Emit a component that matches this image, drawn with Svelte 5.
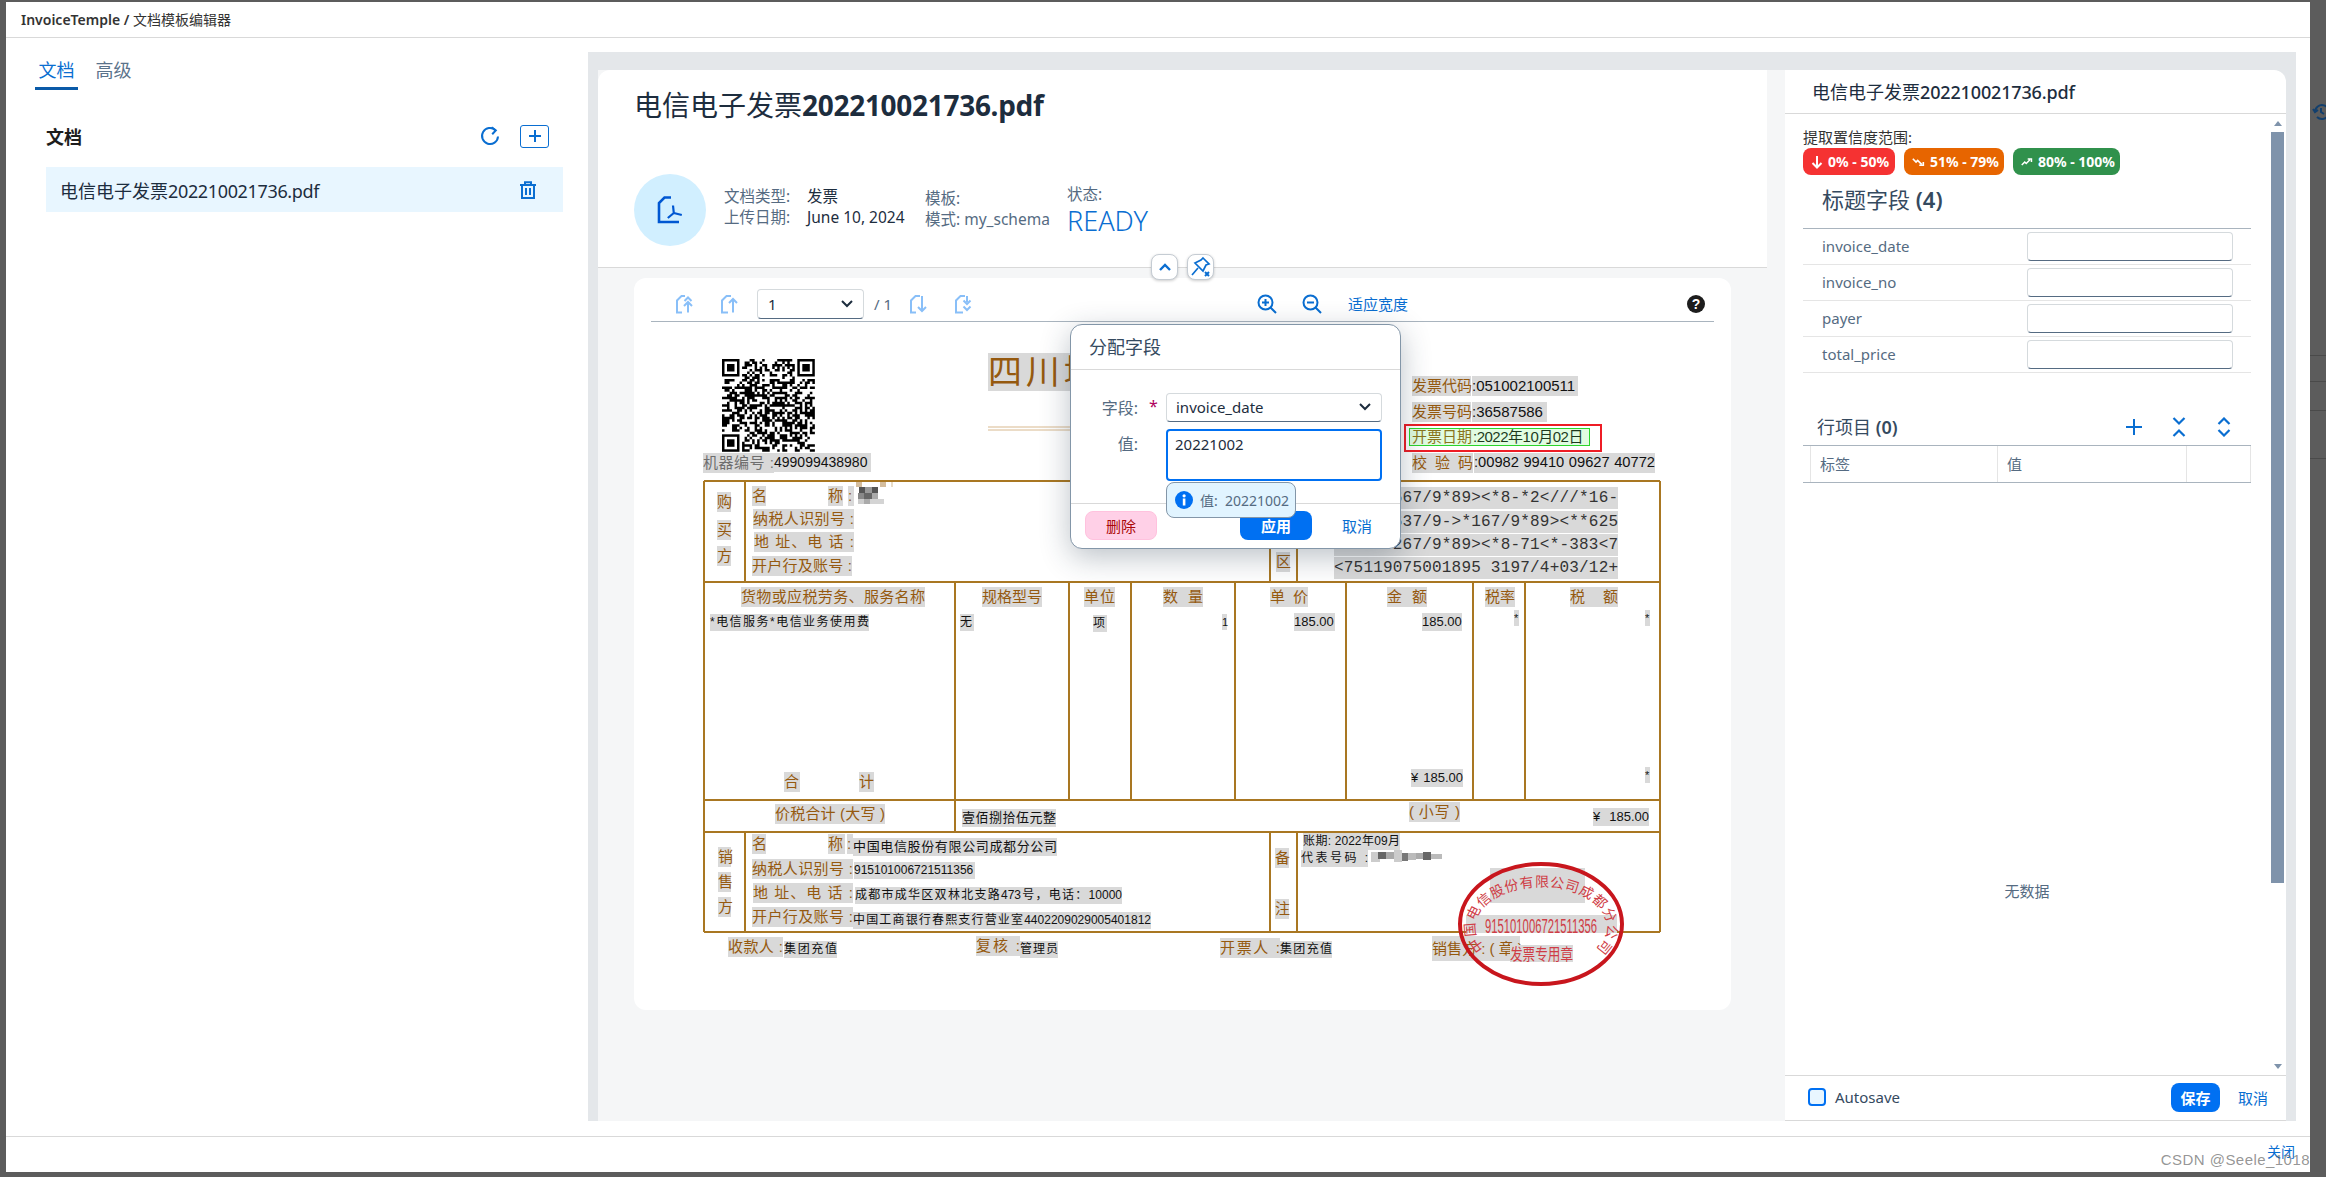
<script>
  const ox = 634;
  const oy = 323;

  const headerFields = ['invoice_date', 'invoice_no', 'payer', 'total_price'];

  // x1, x2, centre y, text, font size, kind
  const items = [
    [1490, 1585, 885, '', 14, 'p', 35],
    [703, 774, 462.5, '机器编号 :', 15, 'g'],
    [774, 871, 462.5, '499099438980', 14, 'v'],
    [988, 1400, 372, '四川增值税电子普通发票', 34, 'l', 38],
    [1412, 1471, 386, '发票代码', 15, 'l'],
    [1472, 1578, 386, ':051002100511', 15, 'v'],
    [1412, 1471, 412, '发票号码', 15, 'l'],
    [1472, 1547, 412, ':36587586', 15, 'v'],
    [1412, 1471, 437, '开票日期', 15, 'lc'],
    [1473, 1589, 437, ':2022年10月02日', 15, 'vc'],
    [1412, 1473, 463, '校 验 码', 15, 'l'],
    [1474, 1655, 463, ':00982 99410 09627 40772', 14.7, 'v'],

    [717, 731, 502, '购', 15, 'l'],
    [717, 731, 530, '买', 15, 'l'],
    [717, 731, 556, '方', 15, 'l'],
    [752, 766, 496, '名', 15, 'l'],
    [828, 843, 496, '称', 15, 'l'],
    [848, 854, 496, ':', 15, 'l'],
    [753, 854, 519, '纳税人识别号 :', 15, 'l'],
    [754, 854, 542, '地 址、电 话 :', 15, 'l'],
    [752, 852, 566, '开户行及账号 :', 15, 'l'],
    [1276, 1290, 562, '区', 15, 'l'],

    [741, 925, 597, '货物或应税劳务、服务名称', 15, 'l'],
    [982, 1042, 597, '规格型号', 15, 'l'],
    [1084, 1115, 597, '单位', 15, 'l'],
    [1163, 1203, 597, '数 量', 15, 'l'],
    [1270, 1308, 597, '单 价', 15, 'l'],
    [1387, 1427, 597, '金 额', 15, 'l'],
    [1485, 1515, 597, '税率', 15, 'l'],
    [1570, 1618, 597, '税 额', 15, 'l'],
    [710, 869, 622, '*电信服务*电信业务使用费', 12, 'v'],
    [960, 974, 622, '无', 12, 'v'],
    [1093, 1107, 623, '项', 12, 'v'],
    [1222, 1227, 622, '1', 11, 'v'],
    [1294, 1335, 622, '185.00', 13, 'v'],
    [1422, 1462, 622, '185.00', 13, 'v'],
    [1514, 1519, 618, '*', 11, 'v'],
    [1645, 1650, 618, '*', 11, 'v'],
    [784, 800, 782, '合', 15, 'l'],
    [859, 874, 782, '计', 15, 'l'],
    [1411, 1463, 778, '¥ 185.00', 13, 'v'],
    [1645, 1650, 775, '*', 11, 'v'],

    [775, 885, 814, '价税合计 (大写 )', 15, 'l'],
    [962, 1056, 818, '壹佰捌拾伍元整', 13, 'v'],
    [1409, 1460, 812, '( 小写 )', 15, 'l'],
    [1593, 1649, 817, '¥ 185.00', 13, 'v'],

    [718, 731, 857, '销', 15, 'l'],
    [718, 731, 882, '售', 15, 'l'],
    [718, 731, 907, '方', 15, 'l'],
    [752, 766, 844, '名', 15, 'l'],
    [828, 845, 844, '称', 15, 'l'],
    [847, 853, 844, ':', 15, 'l'],
    [853, 1057, 847, '中国电信股份有限公司成都分公司', 13, 'v'],
    [752, 853, 869, '纳税人识别号 :', 15, 'l'],
    [854, 975, 870, '915101006721511356', 12, 'v'],
    [753, 853, 893, '地 址、电 话 :', 15, 'l'],
    [855, 1122, 895, '成都市成华区双林北支路473号，电话：10000', 12, 'v'],
    [752, 853, 917, '开户行及账号 :', 15, 'l'],
    [853, 1151, 920, '中国工商银行春熙支行营业室4402209029005401812', 12, 'v'],
    [728, 783, 947, '收款人 :', 15, 'l'],
    [784, 837, 949, '集团充值', 12, 'v'],
    [976, 1020, 946, '复核 :', 15, 'l'],
    [1020, 1058, 949, '管理员', 12, 'v'],
    [1220, 1280, 948, '开票人 :', 15, 'l'],
    [1280, 1332, 949, '集团充值', 12, 'v'],

    [1275, 1289, 858, '备', 15, 'l'],
    [1275, 1289, 909, '注', 15, 'l'],
    [1303, 1400, 841, '账期: 2022年09月', 12, 'v'],
    [1301, 1368, 858, '代表号码 :', 12, 'v'],
    [1432, 1520, 948, '销售方 : ( 章 )', 15, 'l', 25],
    [1466, 1617, 924, '', 14, 'p', 18],
    [1510, 1573, 953, '', 14, 'p', 17]
  ];

  const cipher = [
    [498, '<75110667/9*89><*8-*2<///*16-'],
    [522, '<75110637/9->*167/9*89><**625'],
    [545, '75110 6267/9*89><*8-71<*-383<7'.replace(' ', '')],
    [568, '<75119075001895 3197/4+03/12+']
  ];

  const lines = [
    // horizontal
    [704, 481, 1660, 481], [704, 582, 1660, 582], [704, 800, 1660, 800],
    [704, 832, 1660, 832], [704, 932, 1660, 932],
    // outer
    [704, 481, 704, 932], [1660, 481, 1660, 932],
    // buyer and seller
    [745, 481, 745, 582], [1270, 481, 1270, 582], [1297, 481, 1297, 582],
    [745, 832, 745, 932], [1270, 832, 1270, 932], [1297, 832, 1297, 932],
    // item columns
    [955, 582, 955, 832], [1069, 582, 1069, 800], [1131, 582, 1131, 800],
    [1235, 582, 1235, 800], [1346, 582, 1346, 800], [1473, 582, 1473, 800],
    [1525, 582, 1525, 800]
  ];

  const blurred = [
    [856, 482, 6, 5, '#d4bd9e'], [880, 482, 6, 5, '#d4bd9e'], [891, 482, 2, 5, '#e8dcc8'],
    [859, 487, 6, 6, '#555'], [865, 487, 7, 6, '#999'], [872, 487, 6, 6, '#555'],
    [858, 493, 6, 6, '#888'], [864, 493, 8, 6, '#666'], [872, 493, 6, 6, '#aaa'],
    [858, 499, 6, 5, '#ccc'], [864, 499, 6, 5, '#aaa'], [870, 499, 14, 5, '#d4d4d4'],
    [1371, 852, 9, 10, '#ccc'], [1378, 852, 8, 7, '#666'], [1386, 852, 8, 7, '#aaa'],
    [1394, 850, 8, 12, '#ccc'], [1402, 853, 6, 8, '#777'], [1408, 853, 8, 7, '#bbb'],
    [1416, 853, 7, 6, '#aaa'], [1423, 852, 8, 8, '#666'], [1431, 854, 11, 5, '#bbb']
  ];

  // finder squares plus a seeded fill, it only has to look like a QR code
  const qrSize = 37;
  const cell = 2.51;
  function makeQr() {
    let d = '';
    let seed = 20221002;
    const finder = (r, c) => (r < 8 && c < 8) || (r < 8 && c >= qrSize - 8) || (r >= qrSize - 8 && c < 8);
    for (let r = 0; r < qrSize; r++) {
      for (let c = 0; c < qrSize; c++) {
        seed = (seed * 1103515245 + 12345) & 0x7fffffff;
        if (!finder(r, c) && (seed >> 16) % 100 < 52) {
          d += `M${(c * cell).toFixed(2)} ${(r * cell).toFixed(2)}h${cell}v${cell}h-${cell}z`;
        }
      }
    }
    return d;
  }
  const qrPath = makeQr();
  const finders = [[0, 0], [30 * cell, 0], [0, 30 * cell]];
</script>

<div class="page">
  <div class="behind">
    <svg class="behind-icon" viewBox="0 0 18 18" width="18" height="18" fill="none" stroke="#123f6d" stroke-width="2"><path d="M3 9a7 7 0 1 1 2 5M1 6l2 3 3-2M9 5v4l3 2"/></svg>
    <i style="top:355px"></i><i style="top:381px"></i><i style="top:410px"></i><i style="top:458px"></i>
  </div>

  <div class="window">
    <header class="win-head">InvoiceTemple / <span class="thin">文档模板编辑器</span></header>

    <div class="win-body">
      <aside class="left">
        <nav class="tabs">
          <span class="tab active">文档</span>
          <span class="tab">高级</span>
        </nav>
        <div class="doc-head">
          <strong>文档</strong>
          <svg class="refresh" viewBox="0 0 20 20" width="20" height="20" fill="none" stroke="#0a6ed1" stroke-width="2"><path d="M15.5 4.2A8 8 0 1 0 18 10.5"/><path d="M11.5 1.2l4.3 3.2-3.6 3.8"/></svg>
          <span class="add"><svg viewBox="0 0 14 14" width="14" height="14" stroke="#0a6ed1" stroke-width="2"><path d="M7 1v12M1 7h12"/></svg></span>
        </div>
        <div class="doc-item">
          <span>电信电子发票<span class="tight">202210021736.pdf</span></span>
          <svg viewBox="0 0 16 18" width="16" height="18" fill="none" stroke="#0a6ed1" stroke-width="2"><path d="M0 4h16M5 4V1.2h6V4M2 4v13h12V4M6 7v7M10 7v7"/></svg>
        </div>
      </aside>

      <main class="main">
        <section class="work">
          <div class="doc-card">
            <h1>电信电子发票<b>202210021736.pdf</b></h1>
            <div class="meta">
              <div class="avatar">
                <svg viewBox="0 0 26 28" width="26" height="28" fill="none" stroke="#0057d2" stroke-width="2.6"><path d="M14 1.500H7.500L2 7V26H22"/><path d="M16 9.500l.8 7.500M16.800 17l-6 5M16.800 17l8 2" stroke-width="2.200"/></svg>
              </div>
              <div class="col1">
                <span class="key">文档类型:</span><span class="val">发票</span>
                <span class="key">上传日期:</span><span class="val">June 10, 2024</span>
              </div>
              <div class="col2">
                <div>模板:</div>
                <div>模式: my_schema</div>
              </div>
              <div class="col3">
                <div>状态:</div>
                <div class="ready">READY</div>
              </div>
            </div>
          </div>

          <button class="float up" aria-label="collapse">
            <svg viewBox="0 0 12 8" width="12" height="8" fill="none" stroke="#0a6ed1" stroke-width="2.4"><path d="M1 7l5-5 5 5"/></svg>
          </button>
          <button class="float pin" aria-label="unpin">
            <svg viewBox="0 0 22 22" width="22" height="22" fill="none" stroke="#0a6ed1" stroke-width="1.7"><path d="M13 2l6 6-3 1-3 6-8-8 6-3zM8 12l-6 7"/><path d="M15 16l4 4M19 16l-4 4" stroke-width="2"/></svg>
          </button>

          <div class="pdf-card">
            <div class="toolbar">
              <svg class="pg first" viewBox="0 0 18 20" width="18" height="20"><path d="M10 2H6.500L2 6.500V18.500H7"/><path d="M13 18.500V9M9 12l4-4 4 4M9.500 7l3.500-3.500L16.500 7"/></svg>
              <svg class="pg second" viewBox="0 0 18 20" width="18" height="20"><path d="M11 2H6.500L2 6.500V18.500H8"/><path d="M13 18.500V5M9 9l4-4 4 4"/></svg>
              <div class="page-select">
                <span>1</span>
                <svg viewBox="0 0 12 8" width="12" height="8" fill="none" stroke="#1d2d3e" stroke-width="2"><path d="M1 1l5 5 5-5"/></svg>
              </div>
              <span class="of">/ 1</span>
              <svg class="pg third" viewBox="0 0 18 20" width="18" height="20"><path d="M7 18.500H2V6.500L6.500 2H11"/><path d="M13 2v15M9 13l4 4 4-4"/></svg>
              <svg class="pg fourth" viewBox="0 0 18 20" width="18" height="20"><path d="M9 18.500H2V6.500L6.500 2H11"/><path d="M13 2v6M9.500 6.500L13 10l3.500-3.500M9.500 12.500L13 16l3.500-3.500"/></svg>
              <svg class="mag in" viewBox="0 0 20 20" width="20" height="20"><circle cx="8.500" cy="8.500" r="7"/><path d="M13.500 13.500L19 19M8.500 5v7M5 8.500h7"/></svg>
              <svg class="mag out" viewBox="0 0 20 20" width="20" height="20"><circle cx="8.500" cy="8.500" r="7"/><path d="M13.500 13.500L19 19M5 8.500h7"/></svg>
              <span class="fit">适应宽度</span>
              <span class="help">?</span>
            </div>

            <div class="sheet">
              <svg class="sheet-lines" viewBox="{ox} {oy} 1097 687" width="1097" height="687">
                <path d="M988 427H1400M988 430H1400" stroke="#d8b98f" stroke-width="1" fill="none"/>
                {#each lines as l}
                  <line x1={l[0]} y1={l[1]} x2={l[2]} y2={l[3]} stroke="#a97722" stroke-width="2"/>
                {/each}
              </svg>

              <svg class="qr" viewBox="0 0 93 93" width="93" height="93">
                <path d={qrPath} fill="#000"/>
                {#each finders as f}
                  <rect x={f[0] + 1.25} y={f[1] + 1.25} width="15" height="15" fill="none" stroke="#000" stroke-width="2.5"/>
                  <rect x={f[0] + 5} y={f[1] + 5} width="7.5" height="7.5" fill="#000"/>
                {/each}
              </svg>

              {#each items as it}
                <span
                  class="txt {it[5]}"
                  style="left:{it[0] - ox}px;top:{it[2] - oy - (it[6] ?? it[4] + 5) / 2}px;width:{it[1] - it[0]}px;height:{it[6] ?? it[4] + 5}px;line-height:{it[6] ?? it[4] + 5}px;font-size:{it[4]}px"
                >{it[3]}</span>
              {/each}

              {#each cipher as c}
                <span class="cipher" style="top:{c[0] - oy - 11}px">{c[1]}</span>
              {/each}

              <svg class="sheet-lines top" viewBox="{ox} {oy} 1097 687" width="1097" height="687">
                {#each blurred as b}
                  <rect x={b[0]} y={b[1]} width={b[2]} height={b[3]} fill={b[4]}/>
                {/each}
                <rect x="1405" y="425" width="196" height="26" fill="none" stroke="#ee1c25" stroke-width="2"/>
                <rect x="1409.5" y="428.5" width="180" height="17" fill="rgba(90,240,90,.18)" stroke="#2bd52b" stroke-width="1"/>
                <ellipse cx="1541" cy="924" rx="81" ry="60" fill="none" stroke="#c8161d" stroke-width="4"/>
                <defs><path id="stampArc" d="M1485 948A66 40 0 1 1 1597 948"/></defs>
                <text class="stamp arc"><textPath href="#stampArc">中国电信股份有限公司成都分公司</textPath></text>
                <text class="stamp num" x="1485" y="933" textLength="112" lengthAdjust="spacingAndGlyphs">915101006721511356</text>
                <text class="stamp big" x="1510" y="960" textLength="63" lengthAdjust="spacingAndGlyphs">发票专用章</text>
              </svg>
            </div>

            <div class="assign">
              <div class="assign-title">分配字段</div>
              <div class="assign-form">
                <span class="lbl">字段:</span>
                <span class="star">*</span>
                <div class="field-select">
                  <span>invoice_date</span>
                  <svg viewBox="0 0 12 8" width="12" height="8" fill="none" stroke="#1d2d3e" stroke-width="2"><path d="M1 1l5 5 5-5"/></svg>
                </div>
                <span class="lbl val-lbl">值:</span>
                <span></span>
                <textarea readonly>20221002</textarea>
              </div>
              <div class="assign-foot">
                <button class="del">删除</button>
                <button class="apply">应用</button>
                <button class="ghost">取消</button>
              </div>
              <div class="hint">
                <svg viewBox="0 0 18 18" width="18" height="18"><circle cx="9" cy="9" r="9" fill="#0070f2"/><rect x="7.8" y="7.5" width="2.6" height="7" fill="#fff"/><circle cx="9.1" cy="4.8" r="1.6" fill="#fff"/></svg>
                <span>值:&nbsp; 20221002</span>
              </div>
            </div>
          </div>
        </section>

        <section class="side">
          <div class="side-title">电信电子发票<b>202210021736.pdf</b></div>
          <div class="side-body">
            <div class="range-label">提取置信度范围:</div>
            <div class="badges">
              <span class="badge red">
                <svg viewBox="0 0 12 14" width="12" height="14" fill="none" stroke="#fff" stroke-width="2"><path d="M6 1v11M1.500 8L6 12.500 10.500 8"/></svg>
                0% - 50%
              </span>
              <span class="badge orange">
                <svg viewBox="0 0 16 12" width="16" height="12" fill="none" stroke="#fff" stroke-width="2"><path d="M1 2l4 4 2-2 5 5M9 10h5V6"/></svg>
                51% - 79%
              </span>
              <span class="badge green">
                <svg viewBox="0 0 16 12" width="16" height="12" fill="none" stroke="#fff" stroke-width="2"><path d="M1 10l4-4 2 2 5-5M9 2h5v4"/></svg>
                80% - 100%
              </span>
            </div>

            <h2>标题字段 <b>(4)</b></h2>
            <div class="fields">
              {#each headerFields as f}
                <div class="field-row">
                  <label for={f}>{f}</label>
                  <input id={f} type="text" />
                </div>
              {/each}
            </div>

            <div class="lines-head">
              <h3>行项目 <b>(0)</b></h3>
              <svg viewBox="0 0 20 20" width="20" height="20" fill="none" stroke="#0a6ed1" stroke-width="2"><path d="M10 2v16M2 10h16"/></svg>
              <svg viewBox="0 0 20 20" width="20" height="20" fill="none" stroke="#0a6ed1" stroke-width="2.2"><path d="M4.500 1l5.500 5.500L15.500 1M4.500 19l5.500-5.500 5.500 5.500"/></svg>
              <svg viewBox="0 0 20 20" width="20" height="20" fill="none" stroke="#0a6ed1" stroke-width="2.2"><path d="M4.500 7L10 1.500 15.500 7M4.500 13l5.500 5.500 5.500-5.500"/></svg>
            </div>
            <div class="lines-table">
              <span></span><span>标签</span><span>值</span><span></span>
            </div>
            <div class="empty">无数据</div>

            <div class="scrollbar">
              <i class="arrow-up"></i>
              <div class="thumb"></div>
              <i class="arrow-down"></i>
            </div>
          </div>
          <div class="side-foot">
            <span class="check"></span>
            <span class="auto">Autosave</span>
            <button class="apply save">保存</button>
            <button class="ghost">取消</button>
          </div>
        </section>
      </main>
    </div>

    <footer class="win-foot"><span>关闭</span></footer>
  </div>
  <div class="watermark">CSDN @Seele_1018</div>
</div>

<style>
  :global(body) {
    margin: 0;
    background: #5c5c5c;
  }

  .page {
    position: relative;
    width: 2326px;
    height: 1177px;
    box-sizing: border-box;
    padding: 2px 16px 5px 6px;
    overflow: hidden;
    font-family: "Noto Sans", "Noto Sans CJK SC", sans-serif;
    color: #1d2d3e;
  }

  .behind i {
    position: absolute;
    left: 2310px;
    width: 16px;
    height: 1px;
    background: #4a4a4a;
  }
  .behind-icon {
    position: absolute;
    left: 2312px;
    top: 103px;
  }

  .window {
    height: 100%;
    display: flex;
    flex-direction: column;
    background: #fff;
  }

  .win-head {
    height: 35px;
    line-height: 35px;
    flex: none;
    padding-left: 15px;
    font-size: 14px;
    font-weight: 600;
    color: #333;
    border-bottom: 1px solid #d9d9d9;
  }
  .thin {
    font-weight: 400;
  }

  .win-body {
    flex: 1;
    display: flex;
    min-height: 0;
  }

  .left {
    width: 582px;
    flex: none;
  }

  .tabs {
    display: flex;
    gap: 14px;
    padding: 19px 0 0 29px;
  }
  .tab {
    width: 43px;
    height: 33px;
    text-align: center;
    font-size: 18px;
    line-height: 26px;
    color: #5b738b;
    box-sizing: border-box;
  }
  .tab.active {
    color: #0a6ed1;
    border-bottom: 3px solid #0a5aa8;
  }

  .doc-head {
    display: flex;
    align-items: center;
    margin: 34px 0 0 40px;
    width: 503px;
    height: 24px;
  }
  .doc-head strong {
    font-size: 18px;
    color: #1d1d1d;
    flex: 1;
  }
  .add {
    width: 27px;
    height: 21px;
    margin-left: 20px;
    border: 1px solid #0a6ed1;
    border-radius: 3px;
    display: flex;
    align-items: center;
    justify-content: center;
  }

  .doc-item {
    margin: 19px 0 0 40px;
    width: 517px;
    height: 45px;
    background: #e8f6ff;
    display: flex;
    align-items: center;
    justify-content: space-between;
    padding: 0 27px 0 14px;
    box-sizing: border-box;
    font-size: 18px;
  }
  .tight {
    letter-spacing: -.35px;
  }

  .main {
    flex: 1;
    display: flex;
    margin: 14px 14px 15px 0;
    padding: 18px 10px 0;
    background: #e4e7ea;
    min-width: 0;
  }

  .work {
    position: relative;
    width: 1187px;
    flex: none;
    background: #f5f6f7;
  }

  .doc-card {
    width: 1169px;
    height: 198px;
    box-sizing: border-box;
    padding: 18px 36px 0 36px;
    background: #fff;
    border-radius: 12px 0 0 0;
    border-bottom: 1px solid #d9d9d9;
  }
  h1 {
    margin: 0;
    font-size: 28px;
    line-height: 34px;
    font-weight: 400;
  }
  h1 b {
    letter-spacing: -.3px;
  }
  .meta {
    display: flex;
    margin-top: 52px;
    font-size: 15.5px;
    line-height: 21px;
    color: #556b82;
  }
  .avatar {
    width: 72px;
    height: 72px;
    border-radius: 50%;
    background: #d1efff;
    display: flex;
    align-items: center;
    justify-content: center;
  }
  .col1 {
    margin-left: 18px;
    padding-top: 12px;
    width: 201px;
    display: grid;
    grid-template-columns: 83px 1fr;
    grid-auto-rows: 21px;
  }
  .val {
    color: #1d2d3e;
  }
  .col2 {
    width: 142px;
    padding-top: 14px;
  }
  .col3 {
    padding-top: 10px;
  }
  .ready {
    font-size: 27px;
    line-height: 32px;
    font-weight: 300;
    color: #0a6ed1;
  }

  .float {
    position: absolute;
    top: 184px;
    width: 27px;
    height: 26px;
    padding: 0;
    display: flex;
    align-items: center;
    justify-content: center;
    background: #fff;
    border: 1px solid #c5ccd3;
    border-radius: 8px;
    box-shadow: 0 1px 3px rgba(0, 0, 0, .2);
    z-index: 2;
  }
  .up {
    left: 553px;
  }
  .pin {
    left: 589px;
  }

  .pdf-card {
    position: absolute;
    left: 36px;
    top: 208px;
    width: 1097px;
    height: 732px;
    background: #fff;
    border-radius: 12px;
  }

  .toolbar {
    display: flex;
    align-items: center;
    height: 44px;
    margin: 0 17px;
    padding: 8px 0 0 24px;
    box-sizing: border-box;
    border-bottom: 1px solid #a9b4be;
    font-size: 15px;
    color: #556b82;
  }
  .pg {
    flex: none;
    fill: none;
    stroke: #89bff8;
    stroke-width: 2;
  }
  .second {
    margin-left: 27px;
  }
  .page-select {
    width: 107px;
    height: 30px;
    margin-left: 19px;
    box-sizing: border-box;
    padding: 0 10px;
    display: flex;
    align-items: center;
    justify-content: space-between;
    border: 1px solid #d5dadd;
    border-bottom-color: #556b82;
    border-radius: 4px;
    color: #1d2d3e;
  }
  .of {
    margin-left: 10px;
    width: 25px;
  }
  .third {
    margin-left: 10px;
  }
  .fourth {
    margin-left: 27px;
  }
  .mag {
    flex: none;
    fill: none;
    stroke: #0a6ed1;
    stroke-width: 2;
  }
  .in {
    margin-left: 285px;
  }
  .out {
    margin-left: 25px;
  }
  .fit {
    margin-left: 26px;
    font-size: 15px;
    color: #0a6ed1;
    width: 63px;
    white-space: nowrap;
  }
  .help {
    margin-left: 276px;
    width: 18px;
    height: 18px;
    border-radius: 50%;
    background: #1d1d1d;
    color: #fff;
    font: 700 14px/18px "Liberation Sans", sans-serif;
    text-align: center;
  }

  .sheet {
    position: absolute;
    left: 0;
    top: 45px;
    width: 1097px;
    height: 687px;
    overflow: hidden;
    border-radius: 0 0 12px 12px;
  }
  .sheet-lines {
    position: absolute;
    left: 0;
    top: 0;
  }
  .qr {
    position: absolute;
    left: 88px;
    top: 36px;
  }

  .txt {
    position: absolute;
    display: block;
    white-space: nowrap;
    text-align: justify;
    text-align-last: justify;
    font-family: "Liberation Sans", "Noto Sans CJK SC", sans-serif;
    background: #d9d9d9;
  }
  .l {
    color: #95590f;
  }
  .g {
    color: #6e6e6e;
  }
  .v {
    color: #111;
  }
  .lc {
    color: #95590f;
    background: #fff;
  }
  .vc {
    color: #111;
    background: #fff;
    text-align-last: left;
    letter-spacing: -.5px;
  }
  .cipher {
    position: absolute;
    left: 700px;
    height: 22px;
    background: #d9d9d9;
    white-space: pre;
    font: 16px/22px "Liberation Mono", monospace;
    letter-spacing: .2px;
    color: #333;
  }

  .stamp {
    fill: #cf3d46;
    font: 14px "Noto Sans CJK SC", sans-serif;
  }
  .arc {
    letter-spacing: .6px;
  }
  .num {
    font: 20px "Liberation Sans", sans-serif;
  }
  .big {
    font-size: 16px;
  }

  .assign {
    position: absolute;
    left: 436px;
    top: 46px;
    width: 331px;
    height: 225px;
    box-sizing: border-box;
    background: #fff;
    border: 1px solid #8396a8;
    border-radius: 12px;
    box-shadow: 0 8px 30px rgba(30, 50, 70, .3);
    z-index: 3;
  }
  .assign-title {
    height: 44px;
    line-height: 44px;
    padding-left: 18px;
    font-size: 18px;
    color: #354a5f;
    border-bottom: 1px solid #d9d9d9;
  }
  .assign-form {
    display: grid;
    grid-template-columns: 67px 28px 216px;
    grid-template-rows: 29px 52px;
    row-gap: 7px;
    padding-top: 23px;
    height: 110px;
    font-size: 15px;
    border-bottom: 1px solid #d9d9d9;
  }
  .lbl {
    color: #556b82;
    text-align: right;
    font-size: 16px;
    line-height: 31px;
  }
  .val-lbl {
    line-height: 30px;
  }
  .star {
    color: #b00060;
    font-size: 16px;
    line-height: 26px;
    padding-left: 11px;
  }
  .field-select {
    width: 216px;
    box-sizing: border-box;
    display: flex;
    align-items: center;
    justify-content: space-between;
    padding: 0 10px 2px 9px;
    border: 1px solid #d5dadd;
    border-bottom-color: #556b82;
    border-radius: 4px;
  }
  textarea {
    width: 216px;
    height: 52px;
    box-sizing: border-box;
    margin: 0;
    padding: 3px 7px;
    border: 2px solid #0070f2;
    border-radius: 4px;
    resize: none;
    outline: none;
    font: 15px/20px "Noto Sans", sans-serif;
    color: #1d2d3e;
  }
  .assign-foot {
    display: flex;
    align-items: center;
    padding: 7px 0 0 14px;
  }
  button {
    font-family: "Noto Sans", "Noto Sans CJK SC", sans-serif;
    font-size: 15px;
    cursor: pointer;
  }
  .del {
    width: 72px;
    height: 29px;
    padding: 0;
    background: #ffd0e7;
    border: 1px solid #ffc2de;
    border-radius: 8px;
    color: #aa0808;
  }
  .apply {
    width: 72px;
    height: 29px;
    padding: 0;
    margin-left: 83px;
    background: #0070f2;
    border: 0;
    border-radius: 8px;
    color: #fff;
    font-weight: 700;
  }
  .ghost {
    padding: 0;
    margin-left: 30px;
    background: none;
    border: 0;
    color: #0a6ed1;
  }
  .hint {
    position: absolute;
    left: 95px;
    top: 157px;
    width: 130px;
    height: 36px;
    box-sizing: border-box;
    display: flex;
    align-items: center;
    gap: 7px;
    padding-left: 8px;
    background: #e1f4ff;
    border: 1px solid #8396a8;
    border-radius: 8px;
    font-size: 14px;
    color: #556b82;
    white-space: nowrap;
  }

  .side {
    width: 501px;
    flex: none;
    display: flex;
    flex-direction: column;
    background: #fff;
    border-radius: 0 12px 0 0;
    border-bottom: 1px solid #d9d9d9;
    box-sizing: border-box;
  }
  .side-title {
    height: 44px;
    line-height: 44px;
    flex: none;
    padding-left: 27px;
    font-size: 18px;
    border-bottom: 1px solid #d9d9d9;
    box-sizing: border-box;
  }
  .side-title b {
    font-weight: 500;
    letter-spacing: -.15px;
  }
  .side-body {
    position: relative;
    flex: 1;
    padding: 13px 0 0 18px;
    border-radius: 12px;
    min-height: 0;
  }
  .range-label {
    font-size: 15px;
    line-height: 20px;
    color: #333;
  }
  .badges {
    display: flex;
    gap: 9px;
    margin-top: 1px;
  }
  .badge {
    height: 27px;
    box-sizing: border-box;
    padding: 0 5px 0 8px;
    display: flex;
    align-items: center;
    gap: 5px;
    border-radius: 8px;
    color: #fff;
    font-size: 14px;
    font-weight: 700;
    white-space: nowrap;
  }
  .red {
    width: 92px;
    background: #f53232;
  }
  .orange {
    width: 100px;
    background: #e76500;
  }
  .green {
    width: 107px;
    background: #30914c;
  }
  h2 {
    margin: 8px 0 13px 19px;
    font-size: 22px;
    line-height: 32px;
    font-weight: 400;
    color: #354a5f;
  }
  h2 b,
  h3 b {
    font-weight: 600;
  }
  .fields {
    width: 448px;
    border-top: 1px solid #a9b4be;
  }
  .field-row {
    height: 36px;
    box-sizing: border-box;
    display: grid;
    grid-template-columns: 205px 206px;
    align-items: center;
    padding-left: 19px;
    padding-bottom: 1px;
    border-bottom: 1px solid #e5e5e5;
  }
  .field-row label {
    font-size: 15px;
    color: #556b82;
  }
  input {
    width: 206px;
    height: 29px;
    margin: 0;
    box-sizing: border-box;
    border: 1px solid #d5dadd;
    border-bottom-color: #556b82;
    border-radius: 4px;
    outline: none;
  }
  .lines-head {
    width: 431px;
    display: flex;
    align-items: center;
    gap: 25px;
    margin-top: 42px;
    padding-left: 14px;
    box-sizing: border-box;
  }
  h3 {
    flex: 1;
    margin: 0;
    font-size: 18px;
    line-height: 24px;
    font-weight: 400;
    color: #354a5f;
  }
  .lines-table {
    width: 448px;
    height: 38px;
    margin-top: 6px;
    box-sizing: border-box;
    display: grid;
    grid-template-columns: 8px 187px 189px 64px;
    border-top: 1px solid #a9b4be;
    border-bottom: 1px solid #a9b4be;
    font-size: 15px;
    line-height: 36px;
    color: #556b82;
  }
  .lines-table span {
    border-right: 1px solid #e5e5e5;
    padding-left: 9px;
    overflow: hidden;
  }
  .lines-table span:first-child {
    padding: 0;
  }
  .empty {
    width: 448px;
    margin-top: 398px;
    text-align: center;
    font-size: 15px;
    line-height: 20px;
    color: #556b82;
  }
  .scrollbar {
    position: absolute;
    right: 2px;
    top: 0;
    bottom: 0;
    width: 13px;
  }
  .thumb {
    position: absolute;
    top: 18px;
    left: 0;
    right: 0;
    height: 751px;
    background: #7f93ab;
  }
  .arrow-up,
  .arrow-down {
    position: absolute;
    left: 3px;
    width: 0;
    height: 0;
    border-left: 4px solid transparent;
    border-right: 4px solid transparent;
  }
  .arrow-up {
    top: 7px;
    border-bottom: 5px solid #7f93ab;
  }
  .arrow-down {
    bottom: 6px;
    border-top: 5px solid #7f93ab;
  }

  .side-foot {
    flex: none;
    height: 45px;
    display: flex;
    align-items: center;
    padding: 0 18px 2px 23px;
    border-top: 1px solid #d9d9d9;
    box-sizing: border-box;
    font-size: 15px;
  }
  .check {
    width: 18px;
    height: 18px;
    box-sizing: border-box;
    background: #e8f6ff;
    border: 2px solid #0070f2;
    border-radius: 4px;
  }
  .auto {
    margin-left: 9px;
    flex: 1;
    color: #354a5f;
  }
  .save {
    width: 49px;
    margin-left: 0;
  }
  .side-foot .ghost {
    margin-left: 18px;
  }

  .win-foot {
    flex: none;
    height: 36px;
    border-top: 1px solid #d9d9d9;
    box-sizing: border-box;
    display: flex;
    justify-content: flex-end;
    padding: 5px 15px 0 0;
    font-size: 14px;
    line-height: 20px;
    color: #0a6ed1;
  }

  .watermark {
    position: absolute;
    right: 16px;
    top: 1150px;
    font: 15px/20px "Liberation Sans", sans-serif;
    letter-spacing: .45px;
    color: rgba(90, 90, 90, .65);
    white-space: nowrap;
  }
</style>
